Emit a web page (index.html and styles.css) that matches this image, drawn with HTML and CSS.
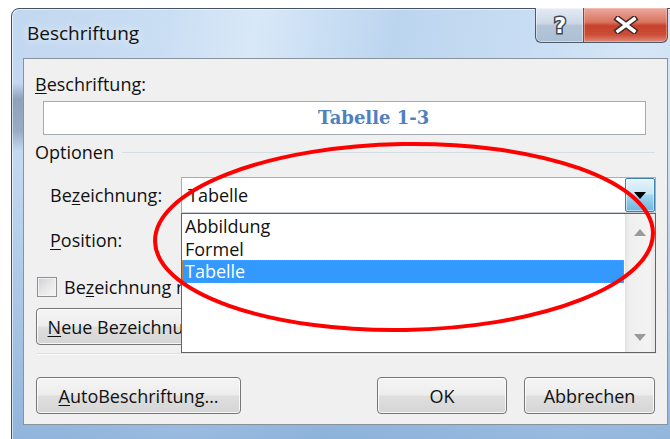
FILE: index.html
```html
<!DOCTYPE html>
<html lang="de">
<head>
<meta charset="utf-8">
<title>Beschriftung</title>
<link rel="stylesheet" href="styles.css">
</head>
<body>
<div class="window">
  <div class="titlebar">
    <span class="title">Beschriftung</span>
    <div class="caption-buttons">
      <div class="cap-help">
        <svg width="24" height="26" viewBox="0 0 24 26"><text x="12" y="21" text-anchor="middle">?</text></svg>
      </div>
      <div class="cap-close">
        <svg width="26" height="18" viewBox="0 0 26 18">
          <path class="x-edge" d="M5 3 L21 15 M21 3 L5 15"/>
          <path class="x-fill" d="M5 3 L21 15 M21 3 L5 15"/>
        </svg>
      </div>
    </div>
  </div>

  <div class="panel">
    <div class="label"><u>B</u>eschriftung:</div>
    <div class="caption-field"><span class="caption-text">Tabelle 1-3</span></div>

    <div class="group-head"><span>Optionen</span><span class="rule"></span></div>

    <div class="field-row">
      <span class="field-label">Be<u>z</u>eichnung:</span>
      <div class="combo">
        <span class="combo-value">Tabelle</span>
        <span class="combo-btn">
          <svg width="12" height="7" viewBox="0 0 12 7"><path d="M0 0 H12 L6 7 Z" fill="#000"/></svg>
        </span>
        <div class="dropdown">
          <ul class="dropdown-items">
            <li>Abbildung</li>
            <li>Formel</li>
            <li class="selected">Tabelle</li>
          </ul>
          <div class="scrollbar">
            <svg width="12" height="7" viewBox="0 0 12 7"><path d="M0 7 L6 0 L12 7 Z" class="arrow"/></svg>
            <svg width="12" height="7" viewBox="0 0 12 7"><path d="M0 0 H12 L6 7 Z" class="arrow"/></svg>
          </div>
        </div>
      </div>
    </div>

    <div class="field-row position-row">
      <span class="field-label"><u>P</u>osition:</span>
    </div>

    <div class="check-row">
      <span class="checkbox"></span>
      <span class="check-label">Be<u>z</u>eichnung nicht in der Beschriftung verwenden</span>
    </div>

    <div class="button-row">
      <button class="btn btn-new"><u>N</u>eue Bezeichnung…</button>
    </div>

    <div class="separator"></div>

    <div class="footer">
      <button class="btn btn-auto"><u>A</u>utoBeschriftung…</button>
      <button class="btn btn-ok">OK</button>
      <button class="btn btn-cancel">Abbrechen</button>
    </div>
  </div>
</div>

<svg class="markup" width="670" height="439" viewBox="0 0 670 439">
  <ellipse cx="404" cy="237" rx="249" ry="93" transform="rotate(-1 404 237)" fill="none" stroke="#ff0000" stroke-width="4"/>
</svg>
</body>
</html>
```

FILE: styles.css
```css
* {
  box-sizing: border-box;
}

html,
body {
  margin: 0;
  padding: 0;
}

body {
  position: relative;
  width: 670px;
  height: 439px;
  overflow: hidden;
  background: #ffffff;
  font-family: "Open Sans", "Noto Sans", sans-serif;
  font-size: 18px;
  color: #111111;
}

u {
  text-decoration-thickness: 1px;
  text-underline-offset: 2px;
}

/* Aero window frame */
.window {
  position: relative;
  margin: 8px 0 0 11px;
  width: 668px;
  height: 450px;
  border: 1px solid #46525f;
  border-radius: 8px 8px 0 0;
  box-shadow: inset 0 0 0 1px rgba(255, 255, 255, 0.55);
  background:
    linear-gradient(to bottom, rgba(98, 118, 142, 0) 74px, rgba(98, 118, 142, 0.55) 90px, rgba(98, 118, 142, 0.45) 122px, rgba(98, 118, 142, 0) 142px) 0 0 / 12px 100% no-repeat,
    linear-gradient(to bottom, rgba(110, 155, 205, 0) 150px, rgba(110, 155, 205, 0.6) 430px),
    linear-gradient(100deg, #c2d8f0 0%, #c9ddf3 20%, #d8e8f8 33%, #bcd5ef 52%, #c8ddf3 70%, #d5e6f7 85%, #c7dcf2 100%);
}

.titlebar {
  height: 49px;
  padding: 13px 0 0 15px;
  font-size: 19px;
  line-height: 22px;
}

.title {
  color: #101010;
  text-shadow: 0 0 8px rgba(255, 255, 255, 0.9);
}

.caption-buttons {
  position: absolute;
  top: -1px;
  left: 523px;
  display: flex;
  height: 35px;
}

.cap-help,
.cap-close {
  display: flex;
  align-items: center;
  justify-content: center;
  height: 100%;
  border: 1px solid #4e5a68;
  border-top: none;
}

.cap-help {
  width: 48px;
  border-right: none;
  border-radius: 0 0 0 6px;
  background: linear-gradient(#e4ecf4 0%, #ccd8e5 45%, #b4c5d8 52%, #abbfd4 100%);
  box-shadow: inset 0 0 0 1px rgba(255, 255, 255, 0.45);
}

.cap-help text {
  font-family: "DejaVu Sans", sans-serif;
  font-weight: bold;
  font-size: 21px;
  fill: #ffffff;
  stroke: #3d4754;
  stroke-width: 3px;
  paint-order: stroke;
}

.cap-close {
  width: 85px;
  border-radius: 0 0 6px 0;
  background: linear-gradient(#eba99d 0%, #d9745f 42%, #c6412b 52%, #cc4d37 78%, #de8a79 100%);
  box-shadow: inset 0 0 0 1px rgba(255, 220, 210, 0.4);
}

.x-edge {
  stroke: #3d2a28;
  stroke-width: 6.5px;
  stroke-linecap: square;
  fill: none;
}

.x-fill {
  stroke: #ffffff;
  stroke-width: 3.5px;
  stroke-linecap: square;
  fill: none;
}

/* Dialog client area */
.panel {
  display: flex;
  flex-direction: column;
  align-items: flex-start;
  margin-left: 11px;
  width: 645px;
  height: 367px;
  padding: 14px 12px 0 11px;
  border: 1px solid #8a929c;
  background: #f0f0f0;
}

.label {
  line-height: 22px;
}

.caption-field {
  margin: 6px 0 0 8px;
  width: 603px;
  height: 34px;
  padding-left: 274px;
  border: 1px solid #a4abb4;
  background: #ffffff;
  line-height: 31px;
}

.caption-text {
  font-family: "DejaVu Serif", "Liberation Serif", serif;
  font-weight: bold;
  font-size: 18px;
  color: #4f81bd;
}

.group-head {
  display: flex;
  align-items: center;
  width: 100%;
  margin-top: 6px;
  line-height: 22px;
}

.rule {
  flex: 1;
  height: 1px;
  margin-left: 8px;
  background: #d3dde4;
}

.field-row {
  display: flex;
  align-items: center;
  margin-top: 14px;
  padding-left: 15px;
}

.field-label {
  width: 131px;
  line-height: 22px;
}

.position-row {
  margin-top: 16px;
}

/* Combobox with open list */
.combo {
  position: relative;
  display: flex;
  align-items: stretch;
  width: 475px;
  height: 36px;
  border: 1px solid #a9adb4;
  border-bottom-color: #c9ced6;
  background: #ffffff;
}

.combo-value {
  flex: 1;
  align-self: center;
  padding-left: 6px;
  line-height: 22px;
}

.combo-btn {
  display: flex;
  align-items: center;
  justify-content: center;
  width: 30px;
  border: 1px solid #3c7fb1;
  border-radius: 2px;
  background: linear-gradient(#e6f4fc 0%, #c9e7f7 45%, #a2d5f0 52%, #6eb6de 100%);
  box-shadow: inset 0 0 0 1px rgba(255, 255, 255, 0.5);
}

.dropdown {
  position: absolute;
  z-index: 5;
  top: calc(100% + 1px);
  left: -1px;
  display: flex;
  width: 475px;
  height: 140px;
  border: 1px solid #646464;
  background: #ffffff;
}

.dropdown-items {
  flex: 1;
  margin: 0 1px 0 0;
  padding: 1px 0 0;
  list-style: none;
}

.dropdown-items li {
  height: 22.5px;
  padding-left: 3px;
  line-height: 22.5px;
}

.dropdown-items li.selected {
  background: #3399ff;
  color: #ffffff;
  outline: 1px dotted #c58c4a;
  outline-offset: -1px;
}

.scrollbar {
  display: flex;
  flex-direction: column;
  align-items: center;
  justify-content: space-between;
  width: 30px;
  padding: 15px 0 11px;
  background: linear-gradient(to right, #e2e2e2 0%, #efefef 15%, #f3f3f3 80%, #e9e9e9 100%);
}

.arrow {
  fill: #9a9a9a;
}

/* Checkbox row; the open list covers the end of its label */
.check-row {
  display: flex;
  align-items: center;
  height: 22px;
  margin-top: 25px;
  padding-left: 2px;
  white-space: nowrap;
}

.checkbox {
  flex: none;
  width: 20px;
  height: 20px;
  margin-right: 7px;
  border: 1px solid #8e8f8f;
  background: linear-gradient(135deg, #cdd0d4 0%, #e6e7e9 50%, #f7f7f7 100%);
  box-shadow: inset 0 0 0 1px #f4f4f4;
}

.check-label {
  display: block;
  width: 117px;
  overflow: hidden;
  line-height: 22px;
}

/* Push buttons */
.btn {
  height: 37px;
  padding: 0;
  border: 1px solid #767676;
  border-radius: 4px;
  background: linear-gradient(#f5f5f5 0%, #ededed 48%, #dfdfdf 52%, #d5d5d5 100%);
  box-shadow: inset 0 0 0 1px rgba(255, 255, 255, 0.8);
  font: inherit;
  line-height: 22px;
  color: #111111;
  white-space: nowrap;
}

.button-row {
  margin-top: 10px;
  margin-left: 1px;
}

.btn-new {
  width: 194px;
}

.separator {
  width: 100%;
  height: 2px;
  margin-top: 8px;
  margin-left: 2px;
  border-top: 1px solid #d6e0e6;
  border-bottom: 1px solid #fafafa;
}

.footer {
  display: flex;
  gap: 17px;
  width: 100%;
  margin-top: 22px;
  padding-left: 1px;
}

.btn-auto {
  width: 205px;
  margin-right: auto;
}

.btn-ok {
  width: 130px;
}

.btn-cancel {
  width: 131px;
}

/* Red highlight drawn over the dialog */
.markup {
  position: absolute;
  top: 0;
  left: 0;
  z-index: 10;
  pointer-events: none;
}
```
